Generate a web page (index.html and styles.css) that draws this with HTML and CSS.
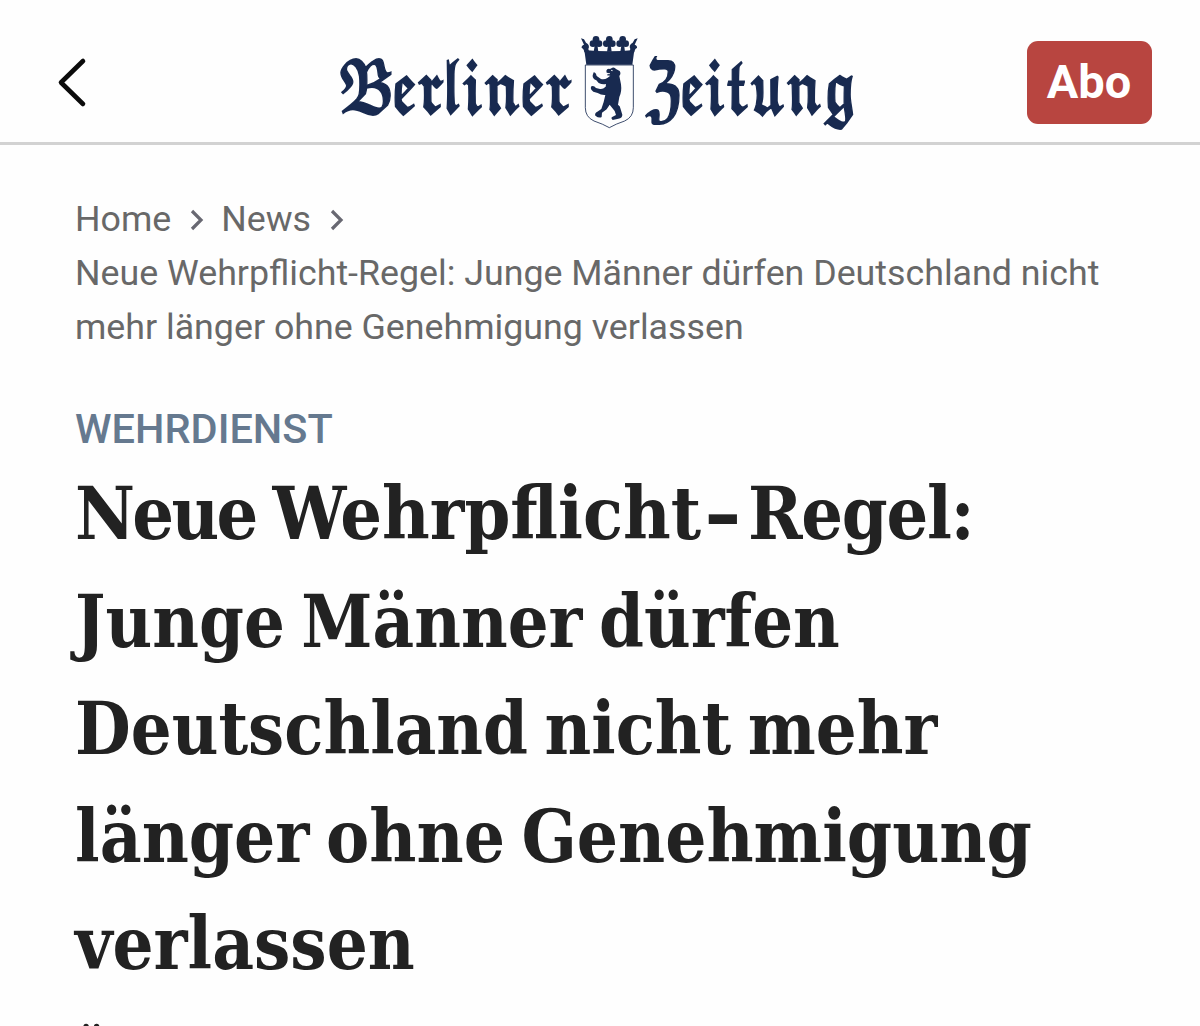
FILE: index.html
```html
<!DOCTYPE html>
<html lang="de">
<head>
<meta charset="utf-8">
<title>Berliner Zeitung</title>
<link rel="stylesheet" href="styles.css">
</head>
<body>
<header class="topbar">
  <a class="back" href="#" aria-label="Zurück">
    <svg width="32" height="52" viewBox="0 0 32 52"><path d="M27 5 5 26.500 27 48" /></svg>
  </a>
  <svg class="logo" width="540" height="115" viewBox="0 0 540 115" role="img" aria-label="Berliner Zeitung">
    <text transform="translate(7 88) scale(1.22 1)" textLength="192" lengthAdjust="spacingAndGlyphs">𝕭𝖊𝖗𝖑𝖎𝖓𝖊𝖗</text>
    <text transform="translate(312 88) scale(1.22 1)" textLength="173" lengthAdjust="spacingAndGlyphs">𝖅𝖊𝖎𝖙𝖚𝖓𝖌</text>
    <g transform="translate(240 0) scale(.33333)">
      <path class="shield" d="M46 120H190V248Q190 276 164 288Q137 297 118 308Q99 297 72 288Q46 276 46 248Z" />
      <path d="M49 119 43 75Q78 79 118 79T193 75L187 119Z" />
      <path d="M33 40 42 43 48 53Q61 60 55 72L58 82H43Q42 71 35 69Q34 61 42 59Z M203 40 194 43 188 53Q175 60 181 72L178 82H193Q194 71 201 69Q202 61 194 59Z" />
      <g id="clover"><circle cx="78" cy="43" r="10"/><circle cx="69" cy="56" r="10"/><circle cx="87" cy="56" r="10"/><path d="M76 50H81L85 80H71Z"/></g>
      <use href="#clover" x="40"/><use href="#clover" x="80"/>
      <path d="M109 137Q111 130 120 132L127 128Q134 126 138 132L149 138Q154 145 148 153L153 178Q156 200 148 216L144 239Q151 243 152 253L157 269Q157 279 145 281L128 285Q123 282 125 277L138 270L134 258L119 239L110 253L96 263L95 276Q88 281 76 272Q73 264 82 260L94 252L101 231L106 210Q94 211 83 204L70 200Q59 193 64 184Q72 181 78 189L90 192Q98 194 107 185L108 177Q98 180 86 174L79 166Q67 162 68 151L71 142Q78 143 80 153L93 162Q104 164 112 159L121 152L111 151L113 147L119 145L110 143Z" />
      <path class="cut" d="M123 136l5 1M111 146h9" />
    </g>
  </svg>
  <a class="abo" href="#">Abo</a>
</header>
<main class="article">
  <nav class="crumbs">
    <div class="trail">
      <a href="#">Home</a><svg width="14" height="22" viewBox="0 0 14 22"><path d="M2 2 11 11 2 20" /></svg>
      <a href="#">News</a><svg width="14" height="22" viewBox="0 0 14 22"><path d="M2 2 11 11 2 20" /></svg>
    </div>
    <span>Neue Wehrpflicht-Regel: Junge Männer dürfen Deutschland nicht</span><br><span>mehr länger ohne Genehmigung verlassen</span>
  </nav>
  <p class="kicker">WEHRDIENST</p>
  <h1>
    <span class="line"><span class="tight">Neue</span> Wehrpflicht<span class="dash">-</span><span class="snug">Regel:</span></span>
    <span class="line t2">Junge Männer dürfen</span>
    <span class="line t3">Deutschland nicht mehr</span>
    <span class="line t4">länger ohne Genehmigung</span>
    <span class="line t5">verlassen</span>
  </h1>
  <p class="lead">Ü</p>
</main>
</body>
</html>
```
FILE: styles.css
```css
* { box-sizing: border-box; }
html { overflow: hidden; }
body { margin: 0; height: 1026px; overflow: hidden; background: #fefefe; font-family: Roboto, sans-serif; color: #222; }
a { color: inherit; text-decoration: none; }
.topbar { height: 145px; border-bottom: 3px solid #d2d2d2; display: grid; grid-template-columns: 330px 540px 1fr; align-items: start; }
.back { padding: 56px 0 0 56px; height: 110px; }
.back path { fill: none; stroke: #0b0b0b; stroke-width: 4.6; stroke-linecap: round; stroke-linejoin: round; }
.logo { margin-top: 25px; fill: #182a50; }
.logo text { font: 69px "DejaVu Math TeX Gyre", "DejaVu Sans", "Liberation Serif", serif; letter-spacing: -5px; stroke: #182a50; stroke-width: 1.8; }
.shield { fill: #fefefe; stroke: #182a50; stroke-width: 2.5; }
.cut { fill: none; stroke: #fefefe; stroke-width: 2.5; }
.abo { justify-self: end; margin: 41px 48px 0 0; width: 125px; height: 83px; border-radius: 11px; background: #b84540; color: #fff; font-size: 47px; font-weight: 700; line-height: 81px; text-align: center; text-indent: -1px; }
.article { padding: 47px 75px 0; height: 881px; overflow: hidden; }
.crumbs { color: #686868; font-size: 35.75px; line-height: 54px; white-space: nowrap; }
.trail { display: flex; align-items: center; height: 54px; }
.trail svg { margin: 2px 17px 0 19px; }
.trail path { fill: none; stroke: #686872; stroke-width: 3.2; }
.kicker { margin: 48px 0 0; font-size: 41.5px; line-height: 54px; font-weight: 500; color: #65798f; }
h1 { margin: 4px 0 0; font: 700 73px/107.500px "DejaVu Serif Condensed", "DejaVu Serif", serif; white-space: nowrap; }
.line { display: block; width: max-content; transform-origin: left; word-spacing: -6px; }
.tight { letter-spacing: -2.700px; }
.dash { display: inline-block; width: 47px; padding-left: 2px; transform: scaleX(1.4); transform-origin: left; }
.snug { letter-spacing: -1.300px; }
.t2 { transform: scaleX(.979); }
.t3 { transform: scaleX(.979); }
.t4 { transform: scaleX(.987); }
.t5 { transform: scaleX(.983); }
.lead { margin: 25px 0 0; font-size: 50px; line-height: 56px; }
```
